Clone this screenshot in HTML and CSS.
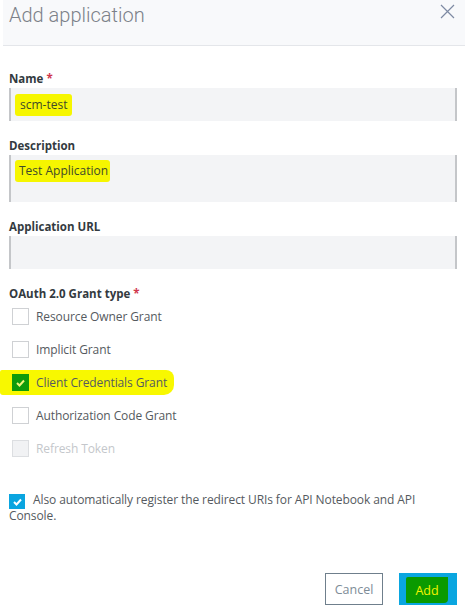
FILE: index.html
```html
<!DOCTYPE html>
<html>
<head>
<meta charset="utf-8">
<link rel="stylesheet" href="styles.css">
</head>
<body>
<div class="dialog">
  <div class="header">
    <h1 class="title">Add application</h1>
    <button class="close" aria-label="Close">
      <svg width="15" height="15" viewBox="0 0 15 15"><path d="M1 1 L14 14 M14 1 L1 14" stroke="#7d8aa3" stroke-width="1.2" fill="none"/></svg>
    </button>
  </div>
  <div class="body">
    <div class="field">
      <label class="label">Name <span class="req">*</span></label>
      <div class="input"><span class="hl hl-name">scm-test</span></div>
    </div>
    <div class="field">
      <label class="label">Description</label>
      <div class="input textarea"><span class="hl hl-desc">Test Application</span></div>
    </div>
    <div class="field">
      <label class="label">Application URL</label>
      <div class="input"></div>
    </div>
    <div class="field grants">
      <label class="label">OAuth 2.0 Grant type <span class="req">*</span></label>
      <div class="check-row"><span class="box"></span><span class="ctext">Resource Owner Grant</span></div>
      <div class="check-row"><span class="box"></span><span class="ctext">Implicit Grant</span></div>
      <div class="check-row highlighted"><span class="box checked-green"><svg width="9" height="8" viewBox="0 0 9 8"><path d="M1 4 L3.5 6.5 L8 1.5" stroke="#f2f57a" stroke-width="2" fill="none"/></svg></span><span class="ctext">Client Credentials Grant</span></div>
      <div class="check-row"><span class="box"></span><span class="ctext">Authorization Code Grant</span></div>
      <div class="check-row disabled"><span class="box"></span><span class="ctext">Refresh Token</span></div>
    </div>
    <p class="also"><span class="box checked-blue"><svg width="9" height="8" viewBox="0 0 9 8"><path d="M1 4 L3.5 6.5 L8 1.5" stroke="#ffffff" stroke-width="2" fill="none"/></svg></span>Also automatically register the redirect URIs for API Notebook and API Console.</p>
    <div class="actions">
      <button class="btn cancel">Cancel</button>
      <button class="btn add"><span class="add-hl">Add</span></button>
    </div>
  </div>
</div>
</body>
</html>
```
FILE: styles.css
```css
* { box-sizing: border-box; }
html, body { margin: 0; padding: 0; background: #fff; }
body {
  width: 465px;
  height: 613px;
  font-family: "Open Sans", "Liberation Sans", sans-serif;
  font-size: 12px;
  color: #555a60;
  overflow: hidden;
}
.dialog { width: 465px; }
.header {
  margin-left: 3px;
  height: 46px;
  background: #f8f9fb;
  border-bottom: 1px solid #e4e6ea;
  display: flex;
  justify-content: space-between;
  align-items: flex-start;
  padding: 0 10px 0 6px;
}
.title {
  margin: 0;
  font-family: Roboto, "Liberation Sans", sans-serif;
  font-weight: 300;
  font-size: 20px;
  line-height: 30px;
  color: #7c8189;
}
.close {
  background: none;
  border: 0;
  padding: 0;
  margin-top: 4px;
  width: 15px;
  height: 15px;
  display: flex;
}
.body {
  padding: 25px 8px 0 9px;
}
.field { margin-bottom: 17px; }
.label {
  display: block;
  font-weight: 700;
  font-size: 11.5px;
  line-height: 16px;
  color: #333a40;
  margin-bottom: 1px;
}
.req { color: #d0374e; }
.input {
  height: 33px;
  background: #f3f4f6;
  border-left: 2px solid #c4c6c9;
  border-right: 2px solid #c4c6c9;
  padding: 0 0 0 6px;
  display: flex;
  align-items: center;
  font-size: 12px;
  color: #3e4a2a;
}
.textarea {
  height: 47px;
  align-items: flex-start;
  padding-top: 5px;
}
.hl {
  background: #f6f600;
  border-radius: 3px;
  line-height: 22px;
}
.hl-name { padding: 0 5px 0 5px; margin-left: -2px; }
.hl-desc { padding: 0 2px 0 4px; margin-left: -2px; }
.grants { margin-bottom: 0; }
.grants .label { margin-bottom: -2px; }
.check-row {
  height: 33px;
  display: flex;
  align-items: center;
  padding-left: 3px;
}
.box {
  width: 17px;
  height: 17px;
  border: 1px solid #cfd1d4;
  background: #fff;
  display: inline-flex;
  align-items: center;
  justify-content: center;
  flex: none;
}
.ctext {
  margin-left: 7px;
  font-size: 12px;
  letter-spacing: -0.1px;
  color: #555a60;
}
.highlighted {
  position: relative;
  isolation: isolate;
}
.highlighted::before {
  content: "";
  position: absolute;
  left: -9px;
  top: 4px;
  width: 174px;
  height: 25px;
  background: #f8f800;
  border-radius: 2px 8px 10px 3px;
  z-index: -1;
}
.checked-green { background: #0e9b0b; border-color: #0e9b0b; }
.disabled .box { background: #f1f2f4; border-color: #dcdee1; }
.disabled .ctext { color: #c4c7cb; }
.also {
  margin: 27px 0 0 0;
  font-size: 12px;
  letter-spacing: -0.1px;
  line-height: 16px;
  color: #555a60;
}
.also .box {
  width: 16px;
  height: 15px;
  vertical-align: top;
  position: relative;
  top: 2px;
  margin-right: 8px;
}
.checked-blue { background: #0aa5e0; border-color: #0aa5e0 !important; }
.actions {
  display: flex;
  justify-content: flex-end;
  gap: 16px;
  margin-top: 49px;
}
.btn {
  width: 58px;
  height: 32px;
  font-family: "Open Sans", "Liberation Sans", sans-serif;
  font-size: 12.5px;
  padding: 0;
  display: flex;
  align-items: center;
  justify-content: center;
}
.cancel {
  background: #fff;
  border: 1px solid #6f7f8c;
  color: #7e8c97;
}
.add {
  background: #0aa6e0;
  border: 0;
  color: #f4f400;
}
.add-hl {
  background: #0a9a00;
  width: 42px;
  height: 26px;
  display: flex;
  align-items: center;
  justify-content: center;
  margin-top: 2px;
  margin-left: -2px;
  border-radius: 2px 0 4px 1px;
}
```
